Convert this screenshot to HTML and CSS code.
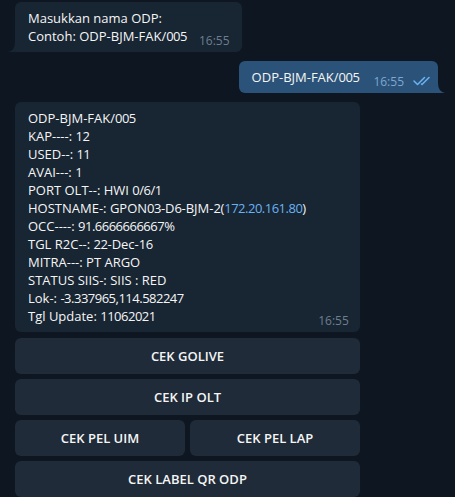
FILE: index.html
```html
<!DOCTYPE html>
<html>
<head>
<meta charset="utf-8">
<link rel="stylesheet" href="styles.css">
</head>
<body>
<div class="chat">
  <div class="bubble in tailed">
    <div class="text">Masukkan nama ODP:<br>Contoh: ODP-BJM-FAK/<span class="n">005</span></div>
    <span class="time">16:55</span>
    <svg class="tail tail-in" width="7" height="10" viewBox="0 0 7 10"><path d="M7 0 Q7 8.5 0 10 L7 10 Z" fill="#182533"/></svg>
  </div>

  <div class="bubble out tailed">
    <div class="text">ODP-BJM-FAK/<span class="n">005</span></div>
    <span class="time">16:55</span>
    <svg class="checks" width="17" height="10" viewBox="0 0 17 10"><path d="M1 5 L4.5 8.5 L11.5 1.5 M8.5 8 L9 8.5 L16 1.5" fill="none" stroke="#6ab3f3" stroke-width="1.5" stroke-linecap="round" stroke-linejoin="round"/></svg>
    <svg class="tail tail-out" width="7" height="10" viewBox="0 0 7 10"><path d="M0 0 Q0 8.5 7 10 L0 10 Z" fill="#2b5278"/></svg>
  </div>

  <div class="bubble in wide">
    <div class="text">ODP-BJM-FAK/<span class="n">005</span><br>KAP----: <span class="n">12</span><br>USED--: <span class="n">11</span><br>AVAI---: <span class="n">1</span><br>PORT OLT--: HWI <span class="n">0/6/1</span><br>HOSTNAME-: GPON<span class="n">03</span>-D<span class="n">6</span>-BJM-<span class="n">2</span>(<span class="link n">172.20.161.80</span>)<br>OCC----: <span class="n">91.6666666667</span>%<br>TGL R2C--: <span class="n">22</span>-Dec-<span class="n">16</span><br>MITRA---: PT ARGO<br>STATUS SIIS-: SIIS : RED<br>Lok-: <span class="n">-3.337965,114.582247</span><br>Tgl Update: <span class="n">11062021</span></div>
    <span class="time">16:55</span>
  </div>

  <div class="keyboard">
    <div class="kb-row"><div class="kb-btn">CEK GOLIVE</div></div>
    <div class="kb-row"><div class="kb-btn">CEK IP OLT</div></div>
    <div class="kb-row"><div class="kb-btn">CEK PEL UIM</div><div class="kb-btn">CEK PEL LAP</div></div>
    <div class="kb-row"><div class="kb-btn">CEK LABEL QR ODP</div></div>
  </div>
</div>
</body>
</html>
```
FILE: styles.css
```css
html, body {
  margin: 0;
  padding: 0;
  background: #0e1621;
  height: 100%;
  overflow: hidden;
}
body {
  font-family: "Open Sans", "Liberation Sans", sans-serif;
  color: #f5f5f5;
}
.chat {
  display: flex;
  flex-direction: column;
  align-items: flex-start;
  padding: 2px 17px 0 15px;
}
.bubble {
  position: relative;
  display: flex;
  align-items: flex-end;
  border-radius: 6px;
  padding: 7px 12px 7px 13px;
  font-size: 13px;
  line-height: 18px;
}
.bubble .text {
  white-space: nowrap;
}
.n {
  letter-spacing: -0.5px;
}
.bubble .time {
  font-size: 12px;
  line-height: 14px;
  margin-bottom: -3px;
  margin-left: 12px;
  color: #6d7f8f;
}
.in {
  background: #182533;
}
.in.tailed {
  border-bottom-left-radius: 0;
}
.out {
  background: #2b5278;
  align-self: flex-end;
  margin-top: 9px;
  padding-right: 8px;
  border-bottom-right-radius: 0;
}
.out .time {
  color: #7da8d3;
  margin-left: 14px;
}
.checks {
  margin-left: 9px;
}
.tail {
  position: absolute;
  bottom: 0;
}
.tail-in {
  left: -7px;
}
.tail-out {
  right: -7px;
}
.wide {
  width: 345px;
  box-sizing: border-box;
  margin-top: 9px;
  justify-content: space-between;
}
.link {
  color: #6ab2f2;
}
.keyboard {
  width: 345px;
  margin-top: 6px;
  display: flex;
  flex-direction: column;
  gap: 5px;
}
.kb-row {
  display: flex;
  gap: 5px;
}
.kb-btn {
  flex: 1;
  height: 36px;
  border-radius: 6px;
  background: #1f2b38;
  display: flex;
  align-items: center;
  justify-content: center;
  font-size: 13px;
  font-weight: 600;
  color: #f5f5f5;
}
```
